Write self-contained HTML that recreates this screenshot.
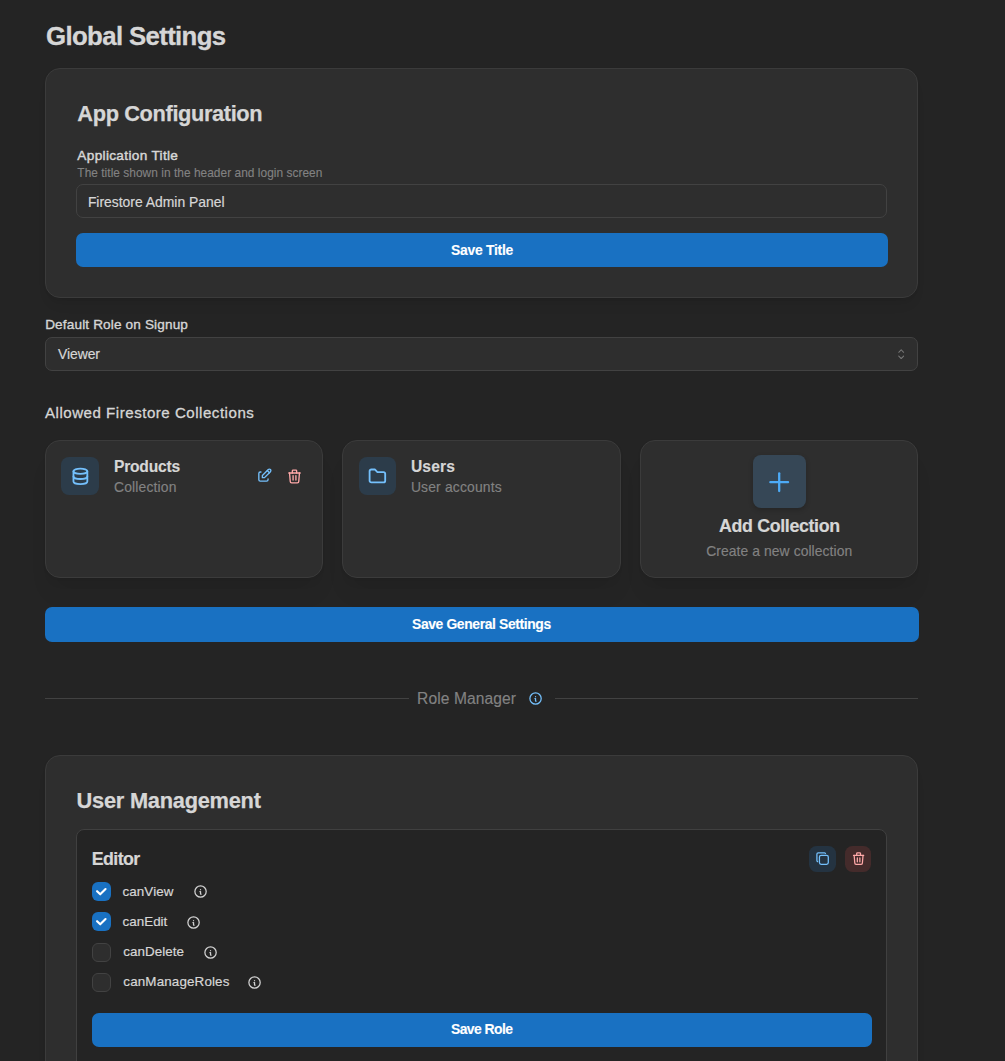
<!DOCTYPE html>
<html lang="en">
<head>
<meta charset="utf-8">
<title>Global Settings</title>
<style>
*{box-sizing:border-box;margin:0;padding:0}
html,body{background:#242424;color:#d6d6d6;font-family:"Liberation Sans",sans-serif}
body{width:1005px;height:1061px;overflow:hidden;position:relative}
.abs{position:absolute}
.t{position:absolute;white-space:nowrap;line-height:1;display:block}
.card{position:absolute;background:#2e2e2e;border:1px solid #3b3b3b;border-radius:15px;box-shadow:0 1px 3px rgba(0,0,0,.05),0 10px 15px -5px rgba(0,0,0,.05),0 7px 7px -5px rgba(0,0,0,.04)}
.card.md{box-shadow:0 1px 3px rgba(0,0,0,.05),0 20px 25px -5px rgba(0,0,0,.05),0 10px 10px -5px rgba(0,0,0,.04)}
.btn{position:absolute;background:#1971c2;border-radius:7px}
.field{position:absolute;background:#2e2e2e;border:1px solid #424242;border-radius:7px}
.ico{position:absolute;border-radius:8px;background:#2c3c4a}
.cb{position:absolute;width:19px;height:19px;border-radius:6px}
.cb.on{background:#1971c2}
.cb.off{background:#2e2e2e;border:1px solid #424242}
svg{position:absolute;overflow:visible}
</style>
</head>
<body>

<!-- cards / boxes -->
<section class="card" style="left:45px;top:68px;width:873px;height:230px"></section>
<div class="field" style="left:76px;top:184px;width:811px;height:34px"></div>
<div class="btn" style="left:76px;top:233px;width:811.7px;height:34px"></div>

<div class="field" style="left:45px;top:337px;width:873px;height:34px"></div>
<svg style="left:893.20px;top:346.10px" width="16.4" height="16.4" viewBox="0 0 15 15" fill="#787878"><path fill-rule="evenodd" clip-rule="evenodd" d="M4.93179 5.43179C4.75605 5.60753 4.75605 5.89245 4.93179 6.06819C5.10753 6.24392 5.39245 6.24392 5.56819 6.06819L7.49999 4.13638L9.43179 6.06819C9.60753 6.24392 9.89245 6.24392 10.0682 6.06819C10.2439 5.89245 10.2439 5.60753 10.0682 5.43179L7.81819 3.18179C7.73379 3.0974 7.61933 3.04999 7.49999 3.04999C7.38064 3.04999 7.26618 3.0974 7.18179 3.18179L4.93179 5.43179ZM10.0682 9.56819C10.2439 9.39245 10.2439 9.10753 10.0682 8.93179C9.89245 8.75606 9.60753 8.75606 9.43179 8.93179L7.49999 10.8636L5.56819 8.93179C5.39245 8.75606 5.10753 8.75606 4.93179 8.93179C4.75605 9.10753 4.75605 9.39245 4.93179 9.56819L7.18179 11.8182C7.35753 11.9939 7.64245 11.9939 7.81819 11.8182L10.0682 9.56819Z"/></svg>

<div class="card md" style="left:45px;top:439.5px;width:278.4px;height:138px"></div>
<div class="card md" style="left:342.3px;top:439.5px;width:278.4px;height:138px"></div>
<div class="card md" style="left:639.6px;top:439.5px;width:278.4px;height:138px"></div>

<div class="ico" style="left:61px;top:456.9px;width:37.8px;height:37.8px"></div>
<svg style="left:69.60px;top:465.60px" width="20.8" height="20.8" viewBox="0 0 24 24" fill="none" stroke="#74c0fc" stroke-width="2.1" stroke-linecap="round" stroke-linejoin="round"><path d="M12 6m-8 0a8 3 0 1 0 16 0a8 3 0 1 0 -16 0"/><path d="M4 6v6a8 3 0 0 0 16 0v-6"/><path d="M4 12v6a8 3 0 0 0 16 0v-6"/></svg>
<svg style="left:256.20px;top:467.10px" width="17" height="17" viewBox="0 0 24 24" fill="none" stroke="#74c0fc" stroke-width="1.9" stroke-linecap="round" stroke-linejoin="round"><path d="M7 7h-1a2 2 0 0 0 -2 2v9a2 2 0 0 0 2 2h9a2 2 0 0 0 2 -2v-1"/><path d="M20.385 6.585a2.1 2.1 0 0 0 -2.97 -2.97l-8.415 8.385v3h3l8.385 -8.415z"/><path d="M16 5l3 3"/></svg>
<svg style="left:286.10px;top:467.50px" width="17" height="17" viewBox="0 0 24 24" fill="none" stroke="#ffa8a8" stroke-width="1.9" stroke-linecap="round" stroke-linejoin="round"><path d="M4 7l16 0"/><path d="M10 11l0 6"/><path d="M14 11l0 6"/><path d="M5 7l1 12a2 2 0 0 0 2 2h8a2 2 0 0 0 2 -2l1 -12"/><path d="M9 7v-3a1 1 0 0 1 1 -1h4a1 1 0 0 1 1 1v3"/></svg>

<div class="ico" style="left:358.6px;top:456.9px;width:37.8px;height:37.8px"></div>
<svg style="left:367.00px;top:465.80px" width="20.8" height="20.8" viewBox="0 0 24 24" fill="none" stroke="#74c0fc" stroke-width="2.1" stroke-linecap="round" stroke-linejoin="round"><path d="M5 4h4l3 3h7a2 2 0 0 1 2 2v8a2 2 0 0 1 -2 2h-14a2 2 0 0 1 -2 -2v-11a2 2 0 0 1 2 -2"/></svg>

<div class="ico" style="left:753px;top:455px;width:52.6px;height:53px;border-radius:8px;background:#364756;box-shadow:0 2px 5px rgba(0,0,0,.2)"></div>
<svg style="left:763.95px;top:466.70px" width="30.4" height="30.4" viewBox="0 0 24 24" fill="none" stroke="#4dabf7" stroke-width="1.8" stroke-linecap="round" stroke-linejoin="round"><path d="M12 5l0 14"/><path d="M5 12l14 0"/></svg>

<div class="btn" style="left:45px;top:607.3px;width:873.8px;height:34.7px"></div>

<div class="abs" style="left:45px;top:698px;width:363.5px;height:1px;background:#424242"></div>
<div class="abs" style="left:555px;top:698px;width:363px;height:1px;background:#424242"></div>
<svg style="left:528.05px;top:690.75px" width="15.1" height="15.1" viewBox="0 0 24 24" fill="none" stroke="#74c0fc" stroke-width="2" stroke-linecap="round" stroke-linejoin="round"><path d="M3 12a9 9 0 1 0 18 0a9 9 0 0 0 -18 0"/><path d="M12 9h.01"/><path d="M11 12h1v4h1"/></svg>

<section class="card" style="left:45px;top:755px;width:873px;height:340px"></section>
<div class="abs" style="left:76px;top:829px;width:811px;height:260px;background:#242424;border:1px solid #404040;border-radius:8px"></div>
<div class="ico" style="left:809.2px;top:845.6px;width:26.4px;height:26.4px;background:#243341;border-radius:7.5px"></div>
<div class="ico" style="left:845px;top:845.6px;width:26.4px;height:26.4px;background:#442b2b;border-radius:7.5px"></div>
<svg style="left:814.90px;top:851.10px" width="15.2" height="15.2" viewBox="0 0 24 24" fill="none" stroke="#74c0fc" stroke-width="2" stroke-linecap="round" stroke-linejoin="round"><path d="M7 7m0 2.667a2.667 2.667 0 0 1 2.667 -2.667h8.666a2.667 2.667 0 0 1 2.667 2.667v8.666a2.667 2.667 0 0 1 -2.667 2.667h-8.666a2.667 2.667 0 0 1 -2.667 -2.667z"/><path d="M4.012 16.737a2.005 2.005 0 0 1 -1.012 -1.737v-10c0 -1.1 .9 -2 2 -2h10c.75 0 1.158 .385 1.5 1"/></svg>
<svg style="left:850.60px;top:851.20px" width="15.2" height="15.2" viewBox="0 0 24 24" fill="none" stroke="#ffa8a8" stroke-width="2" stroke-linecap="round" stroke-linejoin="round"><path d="M4 7l16 0"/><path d="M10 11l0 6"/><path d="M14 11l0 6"/><path d="M5 7l1 12a2 2 0 0 0 2 2h8a2 2 0 0 0 2 -2l1 -12"/><path d="M9 7v-3a1 1 0 0 1 1 -1h4a1 1 0 0 1 1 1v3"/></svg>

<div class="cb on" style="left:92.2px;top:882.2px"></div><svg style="left:96.40px;top:888.29px" width="10.6" height="7.42" viewBox="0 0 10 7" fill="#fff"><path d="M4 4.586L1.707 2.293A1 1 0 1 0 .293 3.707l3 3a.997.997 0 0 0 1.414 0l5-5A1 1 0 1 0 8.293.293L4 4.586z"/></svg>
<div class="cb on" style="left:92.2px;top:912.4px"></div><svg style="left:96.40px;top:918.49px" width="10.6" height="7.42" viewBox="0 0 10 7" fill="#fff"><path d="M4 4.586L1.707 2.293A1 1 0 1 0 .293 3.707l3 3a.997.997 0 0 0 1.414 0l5-5A1 1 0 1 0 8.293.293L4 4.586z"/></svg>
<div class="cb off" style="left:92.2px;top:942.6px"></div>
<div class="cb off" style="left:92.2px;top:972.8px"></div>
<svg style="left:192.75px;top:884.35px" width="15.1" height="15.1" viewBox="0 0 24 24" fill="none" stroke="#d2d2d2" stroke-width="2" stroke-linecap="round" stroke-linejoin="round"><path d="M3 12a9 9 0 1 0 18 0a9 9 0 0 0 -18 0"/><path d="M12 9h.01"/><path d="M11 12h1v4h1"/></svg>
<svg style="left:186.35px;top:914.55px" width="15.1" height="15.1" viewBox="0 0 24 24" fill="none" stroke="#d2d2d2" stroke-width="2" stroke-linecap="round" stroke-linejoin="round"><path d="M3 12a9 9 0 1 0 18 0a9 9 0 0 0 -18 0"/><path d="M12 9h.01"/><path d="M11 12h1v4h1"/></svg>
<svg style="left:203.35px;top:944.75px" width="15.1" height="15.1" viewBox="0 0 24 24" fill="none" stroke="#d2d2d2" stroke-width="2" stroke-linecap="round" stroke-linejoin="round"><path d="M3 12a9 9 0 1 0 18 0a9 9 0 0 0 -18 0"/><path d="M12 9h.01"/><path d="M11 12h1v4h1"/></svg>
<svg style="left:247.45px;top:974.95px" width="15.1" height="15.1" viewBox="0 0 24 24" fill="none" stroke="#d2d2d2" stroke-width="2" stroke-linecap="round" stroke-linejoin="round"><path d="M3 12a9 9 0 1 0 18 0a9 9 0 0 0 -18 0"/><path d="M12 9h.01"/><path d="M11 12h1v4h1"/></svg>

<div class="btn" style="left:92px;top:1012.8px;width:779.5px;height:34.2px"></div>

<!-- text -->
<h1 class="t" id="h1" style="left:46.00px;top:24.46px;font-size:25.8px;font-weight:bold;color:#d6d6d6;letter-spacing:-0.643px;-webkit-text-stroke:0.3px #d6d6d6">Global Settings</h1>
<h2 class="t" id="h2a" style="left:77.34px;top:102.65px;font-size:21.8px;font-weight:bold;color:#d6d6d6;letter-spacing:-0.375px;-webkit-text-stroke:0.25px #d6d6d6">App Configuration</h2>
<label class="t" id="lblApp" style="left:77.34px;top:149.49px;font-size:13.6px;font-weight:normal;color:#d6d6d6;letter-spacing:0.337px;-webkit-text-stroke:0.45px #d6d6d6">Application Title</label>
<div class="t" id="help" style="left:77.34px;top:167.93px;font-size:11.9px;font-weight:normal;color:#828282;letter-spacing:0.040px;-webkit-text-stroke:0.12px #828282">The title shown in the header and login screen</div>
<div class="t" id="inp" style="left:87.88px;top:196.33px;font-size:13.9px;font-weight:normal;color:#d6d6d6;letter-spacing:0.002px;-webkit-text-stroke:0.2px #d6d6d6">Firestore Admin Panel</div>
<span class="t" id="b1" style="left:451.00px;top:244.13px;font-size:13.9px;font-weight:bold;color:#ffffff;letter-spacing:-0.260px;-webkit-text-stroke:0.12px #ffffff">Save Title</span>
<label class="t" id="lblRole" style="left:45.16px;top:317.89px;font-size:13.6px;font-weight:normal;color:#d6d6d6;letter-spacing:0.141px;-webkit-text-stroke:0.35px #d6d6d6">Default Role on Signup</label>
<div class="t" id="viewer" style="left:58.12px;top:348.23px;font-size:13.9px;font-weight:normal;color:#d6d6d6;letter-spacing:-0.072px;-webkit-text-stroke:0.2px #d6d6d6">Viewer</div>
<div class="t" id="lblCol" style="left:45.02px;top:405.22px;font-size:15.1px;font-weight:normal;color:#d6d6d6;letter-spacing:0.507px;-webkit-text-stroke:0.3px #d6d6d6">Allowed Firestore Collections</div>
<div class="t" id="prod" style="left:114.00px;top:459.09px;font-size:15.6px;font-weight:bold;color:#d6d6d6;letter-spacing:-0.211px;-webkit-text-stroke:0.15px #d6d6d6">Products</div>
<div class="t" id="coll" style="left:114.00px;top:481.23px;font-size:13.9px;font-weight:normal;color:#828282;letter-spacing:0.160px;-webkit-text-stroke:0.15px #828282">Collection</div>
<div class="t" id="users" style="left:410.94px;top:459.09px;font-size:15.6px;font-weight:bold;color:#d6d6d6;letter-spacing:0.146px;-webkit-text-stroke:0.15px #d6d6d6">Users</div>
<div class="t" id="uacc" style="left:410.88px;top:481.23px;font-size:13.9px;font-weight:normal;color:#828282;letter-spacing:0.169px;-webkit-text-stroke:0.15px #828282">User accounts</div>
<div class="t" id="addc" style="left:719.00px;top:518.33px;font-size:17.8px;font-weight:bold;color:#d6d6d6;letter-spacing:-0.333px;-webkit-text-stroke:0.2px #d6d6d6">Add Collection</div>
<div class="t" id="crea" style="left:706.16px;top:544.93px;font-size:13.9px;font-weight:normal;color:#828282;letter-spacing:0.077px;-webkit-text-stroke:0.15px #828282">Create a new collection</div>
<span class="t" id="b2" style="left:412.00px;top:618.43px;font-size:13.9px;font-weight:bold;color:#ffffff;letter-spacing:-0.376px;-webkit-text-stroke:0.12px #ffffff">Save General Settings</span>
<div class="t" id="rolem" style="left:417.04px;top:690.69px;font-size:15.6px;font-weight:normal;color:#828282;letter-spacing:0.094px;-webkit-text-stroke:0.15px #828282">Role Manager</div>
<h2 class="t" id="h2b" style="left:76.62px;top:790.35px;font-size:21.8px;font-weight:bold;color:#d6d6d6;letter-spacing:-0.245px;-webkit-text-stroke:0.25px #d6d6d6">User Management</h2>
<h3 class="t" id="editor" style="left:91.84px;top:851.23px;font-size:17.8px;font-weight:bold;color:#d6d6d6;letter-spacing:-0.594px;-webkit-text-stroke:0.2px #d6d6d6">Editor</h3>
<label class="t" id="p1" style="left:122.50px;top:884.96px;font-size:13.4px;font-weight:normal;color:#d6d6d6;letter-spacing:0.090px;-webkit-text-stroke:0.2px #d6d6d6">canView</label>
<label class="t" id="p2" style="left:122.50px;top:914.96px;font-size:13.4px;font-weight:normal;color:#d6d6d6;letter-spacing:0.030px;-webkit-text-stroke:0.2px #d6d6d6">canEdit</label>
<label class="t" id="p3" style="left:123.34px;top:944.96px;font-size:13.4px;font-weight:normal;color:#d6d6d6;letter-spacing:0.045px;-webkit-text-stroke:0.2px #d6d6d6">canDelete</label>
<label class="t" id="p4" style="left:123.34px;top:974.96px;font-size:13.4px;font-weight:normal;color:#d6d6d6;letter-spacing:0.140px;-webkit-text-stroke:0.2px #d6d6d6">canManageRoles</label>
<span class="t" id="b3" style="left:451.00px;top:1022.63px;font-size:13.9px;font-weight:bold;color:#ffffff;letter-spacing:-0.562px;-webkit-text-stroke:0.12px #ffffff">Save Role</span>

</body>
</html>
